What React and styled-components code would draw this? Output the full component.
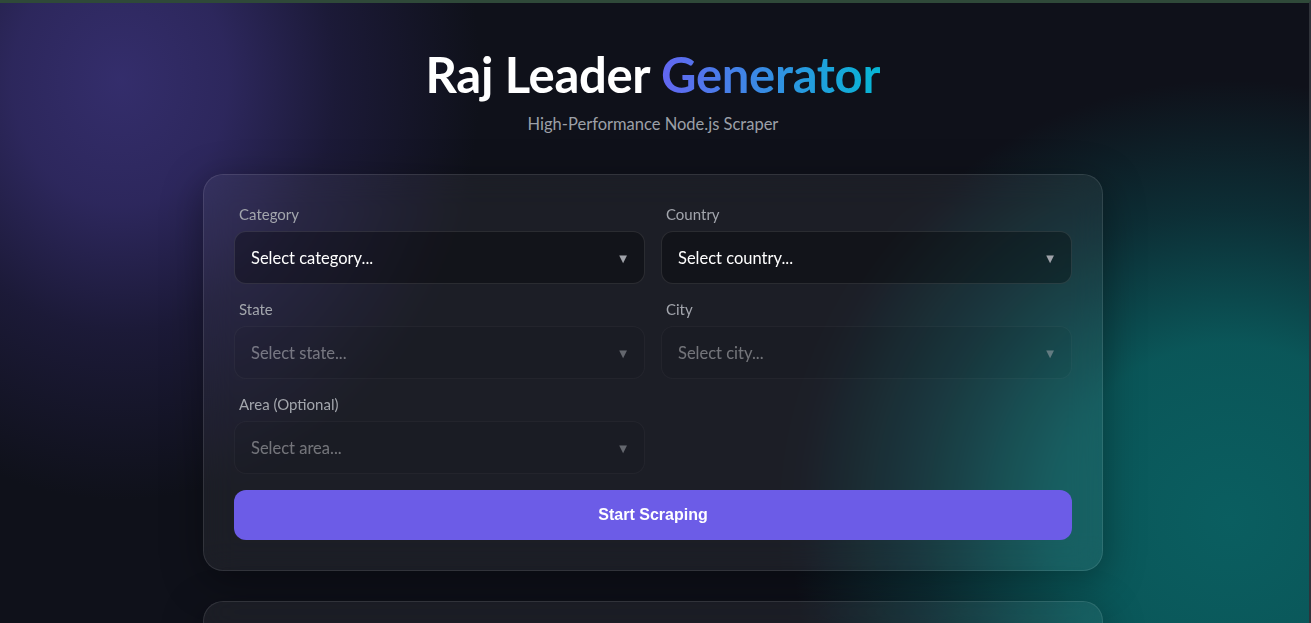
import React from "react";
import styled, { createGlobalStyle } from "styled-components";

const GlobalStyle = createGlobalStyle`
  * { box-sizing: border-box; }
  html, body { margin: 0; padding: 0; }
  body {
    min-height: 100vh;
    padding-right: 3px;
    font-family: "Lato", "Noto Sans", sans-serif;
    color: #f3f4f6;
    border-top: 3px solid #2f4939;
    border-right: 2px solid #30333a;
    background-color: #0f111a;
    background-image:
      radial-gradient(ellipse 360px 420px at 120px 80px, rgba(54, 47, 112, 0.95) 0%, rgba(50, 43, 104, 0.85) 30%, rgba(38, 33, 80, 0.55) 60%, rgba(15, 17, 26, 0) 100%),
      radial-gradient(circle 440px at 1230px 520px, rgba(10, 94, 96, 1) 0%, rgba(10, 90, 92, 0.95) 40%, rgba(11, 66, 72, 0.6) 70%, rgba(15, 17, 26, 0) 100%);
    background-attachment: fixed;
  }
`;

const Page = styled.div`
  max-width: 900px;
  margin: 0 auto;
  padding: 41px 0 60px;
  display: flex;
  flex-direction: column;
  gap: 30px;
`;

const Header = styled.header`
  text-align: center;
  margin-bottom: 8px;
`;

const Title = styled.h1`
  margin: 0;
  font-size: 49px;
  line-height: 60px;
  font-weight: 700;
  color: #ffffff;
  letter-spacing: -0.3px;
`;

const Accent = styled.span`
  background: linear-gradient(90deg, #6366f1, #06b6d4);
  -webkit-background-clip: text;
  background-clip: text;
  color: transparent;
`;

const Subtitle = styled.p`
  margin: 8px 0 0;
  font-size: 16.5px;
  line-height: 24px;
  color: #9ca0a8;
`;

const Card = styled.section`
  background: rgba(255, 255, 255, 0.055);
  border: 1px solid rgba(255, 255, 255, 0.1);
  border-radius: 20px;
  padding: 30px;
  backdrop-filter: blur(16px);
  box-shadow: 0 10px 40px rgba(0, 0, 0, 0.35);
  min-height: ${(p) => p.$minHeight || "auto"};
`;

const Grid = styled.div`
  display: grid;
  grid-template-columns: 1fr 1fr;
  column-gap: 16px;
  row-gap: 16px;
`;

const Field = styled.div`
  display: flex;
  flex-direction: column;
`;

const Label = styled.label`
  font-size: 15px;
  line-height: 18px;
  color: #a3a6ad;
  margin: 0 0 8px 5px;
`;

const SelectWrap = styled.div`
  position: relative;
  opacity: ${(p) => (p.$disabled ? 0.55 : 1)};

  &::after {
    content: "▼";
    position: absolute;
    right: 18px;
    top: 50%;
    transform: translateY(-50%);
    font-family: "DejaVu Sans", sans-serif;
    font-size: 10px;
    color: #a0a3aa;
    pointer-events: none;
  }
`;

const Select = styled.select`
  width: 100%;
  height: 53px;
  appearance: none;
  -webkit-appearance: none;
  padding: 0 40px 0 16px;
  font-family: inherit;
  font-size: 16.5px;
  color: #ffffff;
  background: rgba(0, 0, 0, 0.3);
  border: 1px solid rgba(255, 255, 255, 0.1);
  border-radius: 12px;
  outline: none;
  &:disabled {
    color: #ffffff;
    background: rgba(0, 0, 0, 0.12);
  }
`;

const Button = styled.button`
  width: 100%;
  height: 50px;
  margin-top: 16px;
  border: none;
  border-radius: 12px;
  background: #6c5ce7;
  color: #ffffff;
  font-family: "Liberation Sans", Arial, sans-serif;
  font-size: 16px;
  font-weight: 700;
  cursor: pointer;
`;

const fields = [
  { id: "category", label: "Category", placeholder: "Select category..." },
  { id: "country", label: "Country", placeholder: "Select country..." },
  { id: "state", label: "State", placeholder: "Select state...", disabled: true },
  { id: "city", label: "City", placeholder: "Select city...", disabled: true },
  { id: "area", label: "Area (Optional)", placeholder: "Select area...", disabled: true },
];

const App = () => (
  <>
    <GlobalStyle />
    <Page>
      <Header>
        <Title>
          Raj Leader <Accent>Generator</Accent>
        </Title>
        <Subtitle>High-Performance Node.js Scraper</Subtitle>
      </Header>

      <Card as="form" onSubmit={(e) => e.preventDefault()}>
        <Grid>
          {fields.map((f) => (
            <Field key={f.id}>
              <Label htmlFor={f.id}>{f.label}</Label>
              <SelectWrap $disabled={f.disabled}>
                <Select id={f.id} disabled={f.disabled} defaultValue="">
                  <option value="">{f.placeholder}</option>
                </Select>
              </SelectWrap>
            </Field>
          ))}
        </Grid>
        <Button type="submit">Start Scraping</Button>
      </Card>

      <Card $minHeight="240px" />
    </Page>
  </>
);

export default App;
